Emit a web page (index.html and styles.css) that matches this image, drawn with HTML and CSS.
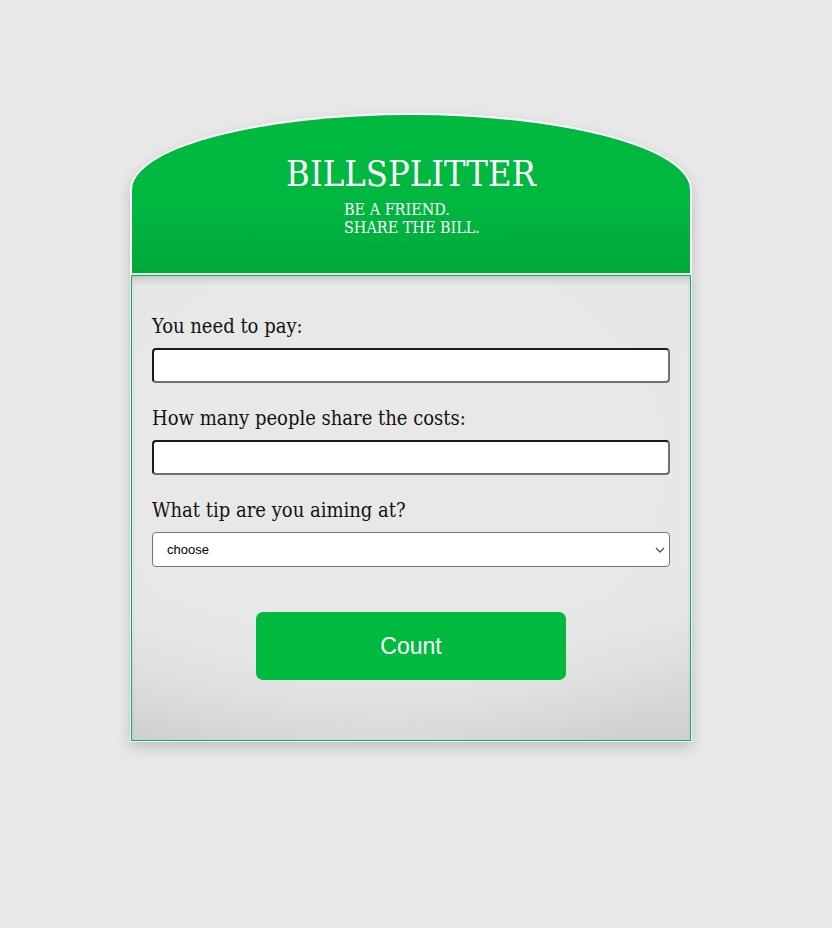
FILE: index.html
```html
<!DOCTYPE html>
<html lang="en">
<head>
<meta charset="utf-8">
<title>Billsplitter</title>
<link rel="stylesheet" href="styles.css">
</head>
<body>
<div class="card">
  <header class="head">
    <h1 class="title">BILLSPLITTER</h1>
    <p class="motto">BE A FRIEND.<br>SHARE THE BILL.</p>
  </header>
  <form class="panel">
    <label class="label" for="amount">You need to pay:</label>
    <input class="field" id="amount" type="text">
    <label class="label" for="people">How many people share the costs:</label>
    <input class="field" id="people" type="text">
    <label class="label" for="tip">What tip are you aiming at?</label>
    <div class="select-wrap">
      <select class="select" id="tip">
        <option>choose</option>
      </select>
      <svg class="chev" width="10" height="6" viewBox="0 0 10 6"><path d="M1 1l4 4 4-4" fill="none" stroke="#555" stroke-width="1.4"/></svg>
    </div>
    <button class="btn" type="button">Count</button>
  </form>
</div>
</body>
</html>
```

FILE: styles.css
```css
html, body {
  margin: 0;
  padding: 0;
}
body {
  background: #e8e8e8;
  min-height: 928px;
}
.card {
  width: 562px;
  margin: 113px 0 0 130px;
  box-shadow: 0 6px 14px rgba(0,0,0,0.18);
  border-radius: 50% 50% 0 0 / 77px 77px 0 0;
}
.head {
  box-sizing: border-box;
  height: 160px;
  border: 2px solid #fff;
  border-bottom: 0;
  border-radius: 50% 50% 0 0 / 77px 77px 0 0;
  background: linear-gradient(180deg, #00b93f 0%, #00b840 55%, #00a83a 100%);
  display: flex;
  flex-direction: column;
  align-items: center;
  color: #fff;
  font-family: "DejaVu Serif Condensed", "DejaVu Serif", "Liberation Serif", serif;
  font-stretch: condensed;
}
.title {
  margin: 37px 0 0;
  font-weight: normal;
  font-size: 36px;
  line-height: 44px;
}
.motto {
  margin: 5px 0 0 0;
  align-self: flex-start;
  padding-left: 212px;
  font-size: 16px;
  line-height: 18px;
}
.panel {
  margin: 2px 1px 0;
  border: 1px solid #00b93f;
  box-shadow: 0 0 0 1px #fff, inset 0 6px 8px -4px rgba(0,0,0,0.2);
  height: 466px;
  box-sizing: border-box;
  padding: 38px 20px 0;
  display: flex;
  flex-direction: column;
  background:
    radial-gradient(ellipse 75% 70% at 45% 40%, #e8e8e8 55%, rgba(232,232,232,0) 100%),
    linear-gradient(180deg, #e6e6e6 0%, #e6e6e6 70%, #d0d0d0 100%);
  background-color: #dadada;
}
.label {
  font-family: "DejaVu Serif Condensed", "DejaVu Serif", "Liberation Serif", serif;
  font-stretch: condensed;
  font-size: 20px;
  line-height: 24px;
  color: #111;
}
.field {
  box-sizing: border-box;
  height: 35px;
  width: 518px;
  margin: 10px 0 23px;
  border: 2px solid;
  border-color: #1c1c1c #6f6f6f #6f6f6f #1c1c1c;
  border-radius: 4px;
  background: #fff;
  padding: 0 6px;
  font-size: 16px;
}
.select-wrap {
  position: relative;
  margin-top: 10px;
  width: 518px;
}
.select {
  box-sizing: border-box;
  width: 518px;
  height: 35px;
  border: 1px solid #767676;
  border-radius: 4px;
  background: #fff;
  -webkit-appearance: none;
  appearance: none;
  padding: 0 14px;
  font-family: "Liberation Sans", Arial, sans-serif;
  font-size: 13px;
  color: #000;
}
.chev {
  position: absolute;
  right: 5px;
  top: 15px;
  pointer-events: none;
}
.btn {
  align-self: center;
  margin-top: 45px;
  width: 310px;
  height: 68px;
  border: 0;
  border-radius: 7px;
  background: #00b93f;
  color: #fff;
  font-family: "Liberation Sans", Arial, sans-serif;
  font-size: 23px;
}
```
